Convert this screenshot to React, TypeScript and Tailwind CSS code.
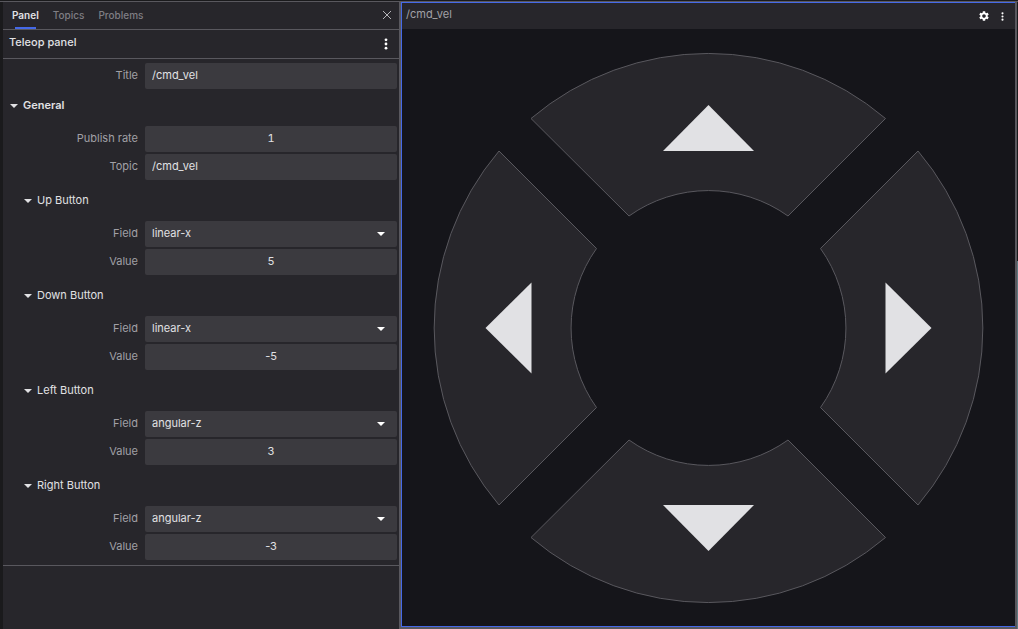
import { useId, useState } from "react";
import type { ReactNode } from "react";

const FIELDS = ["linear-x", "linear-y", "linear-z", "angular-x", "angular-y", "angular-z"];

function Caret() {
  return (
    <svg viewBox="0 0 8 4" className="h-1 w-2 shrink-0 fill-current" aria-hidden="true">
      <path d="M0 0h8L4 4z" />
    </svg>
  );
}

function Dots({ className }: { className: string }) {
  return (
    <svg viewBox="0 0 4 12" className={className} aria-hidden="true">
      <circle cx="2" cy="1.8" r="1.4" />
      <circle cx="2" cy="6" r="1.4" />
      <circle cx="2" cy="10.2" r="1.4" />
    </svg>
  );
}

function Gear() {
  return (
    <svg viewBox="2 2 20 20" className="h-2.5 w-2.5 fill-white" aria-hidden="true">
      <path
        fillRule="evenodd"
        d="M19.14 12.94c.04-.3.06-.61.06-.94 0-.32-.02-.64-.07-.94l2.03-1.58c.18-.14.23-.41.12-.61l-1.92-3.32c-.12-.22-.37-.29-.59-.22l-2.39.96c-.5-.38-1.03-.7-1.62-.94l-.36-2.54c-.04-.24-.24-.41-.48-.41h-3.84c-.24 0-.43.17-.47.41l-.36 2.54c-.59.24-1.13.57-1.62.94l-2.39-.96c-.22-.08-.47 0-.59.22L2.74 8.87c-.12.21-.08.47.12.61l2.03 1.58c-.05.3-.09.63-.09.94s.02.64.07.94l-2.03 1.58c-.18.14-.23.41-.12.61l1.92 3.32c.12.22.37.29.59.22l2.39-.96c.5.38 1.03.7 1.62.94l.36 2.54c.05.24.24.41.48.41h3.84c.24 0 .44-.17.47-.41l.36-2.54c.59-.24 1.13-.56 1.62-.94l2.39.96c.22.08.47 0 .59-.22l1.92-3.32c.12-.22.07-.47-.12-.61l-2.01-1.58zM12 15.6c-1.98 0-3.6-1.62-3.6-3.6s1.62-3.6 3.6-3.6 3.6 1.62 3.6 3.6-1.62 3.6-3.6 3.6z"
      />
    </svg>
  );
}

function Row({ label, id, children }: { label: string; id: string; children: ReactNode }) {
  return (
    <div className="grid h-[26px] grid-cols-[135px_1fr] items-center gap-[7px] pr-0.5">
      <label htmlFor={id} className="pb-0.5 text-right text-[#a1a0a6]">
        {label}
      </label>
      {children}
    </div>
  );
}

function TextField({ label, initial, centered }: { label: string; initial: string; centered?: boolean }) {
  const id = useId();
  const [value, setValue] = useState(initial);
  const signed = value.startsWith("-");
  return (
    <Row label={label} id={id}>
      <input
        id={id}
        value={value}
        onChange={(e) => setValue(e.target.value)}
        className={`h-full w-full min-w-0 rounded-xs bg-[#3b3a3f] px-[7px] pb-0.5 outline-none ${
          centered ? "text-center" : ""
        } ${centered && !signed ? "tabular-nums" : ""}`}
      />
    </Row>
  );
}

function SelectField({ label, initial }: { label: string; initial: string }) {
  const id = useId();
  const [value, setValue] = useState(initial);
  return (
    <Row label={label} id={id}>
      <div className="relative h-full">
        <select
          id={id}
          value={value}
          onChange={(e) => setValue(e.target.value)}
          className="h-full w-full appearance-none rounded-xs bg-[#3b3a3f] px-[7px] pb-0.5 outline-none"
        >
          {FIELDS.map((field) => (
            <option key={field}>{field}</option>
          ))}
        </select>
        <span className="pointer-events-none absolute inset-y-0 right-3 flex items-center text-white">
          <Caret />
        </span>
      </div>
    </Row>
  );
}

function ButtonSection({ name, field, value }: { name: string; field: string; value: string }) {
  const [open, setOpen] = useState(true);
  return (
    <section>
      <button
        type="button"
        aria-expanded={open}
        onClick={() => setOpen(!open)}
        className="flex h-[41px] w-full items-center gap-[5px] pl-[21px] text-left"
      >
        <Caret />
        {name}
      </button>
      {open && (
        <div className="flex flex-col gap-0.5">
          <SelectField label="Field" initial={field} />
          <TextField label="Value" initial={value} centered />
        </div>
      )}
    </section>
  );
}

function Sidebar() {
  const [open, setOpen] = useState(true);
  return (
    <aside className="w-[401px] shrink-0 border-r-2 border-l-[3px] border-r-[#59585e] border-l-[#1a1a1c] bg-[#27262b] text-xs text-[#e1e1e4]">
      <div className="flex h-7 items-center justify-between border-b border-[#59585e] pr-[7px] pl-[9px]">
        <div role="tablist" className="flex h-full gap-3.5 text-[10px] font-medium text-[#7f7e84]">
          <button
            type="button"
            role="tab"
            aria-selected="true"
            className="relative flex items-center font-semibold text-[#e1e1e4]"
          >
            Panel
            <span className="absolute inset-x-[3px] bottom-0 h-0.5 bg-[#4569e8]" />
          </button>
          <button type="button" role="tab" aria-selected="false">
            Topics
          </button>
          <button type="button" role="tab" aria-selected="false">
            Problems
          </button>
        </div>
        <button type="button" aria-label="Close sidebar" className="pb-0.5">
          <svg viewBox="0 0 10 10" className="h-2.5 w-2.5 stroke-[#b5b4b9]" aria-hidden="true">
            <path d="M1 1l8 8M9 1l-8 8" />
          </svg>
        </button>
      </div>
      <header className="flex h-[29px] items-center justify-between border-b border-[#59585e] pr-[11px] pl-1.5">
        <h1 className="pb-1 text-[11px] font-medium">Teleop panel</h1>
        <button type="button" aria-label="Panel menu">
          <Dots className="h-3 w-1 fill-white" />
        </button>
      </header>
      <div className="border-b border-[#59585e] pt-1 pb-[5px] text-[11px]">
        <TextField label="Title" initial="/cmd_vel" />
        <button
          type="button"
          aria-expanded={open}
          onClick={() => setOpen(!open)}
          className="flex h-[37px] w-full items-center gap-[5px] pb-1 pl-[7px] text-left font-semibold"
        >
          <Caret />
          General
        </button>
        {open && (
          <div>
            <div className="flex flex-col gap-0.5">
              <TextField label="Publish rate" initial="1" centered />
              <TextField label="Topic" initial="/cmd_vel" />
            </div>
            <ButtonSection name="Up Button" field="linear-x" value="5" />
            <ButtonSection name="Down Button" field="linear-x" value="-5" />
            <ButtonSection name="Left Button" field="angular-z" value="3" />
            <ButtonSection name="Right Button" field="angular-z" value="-3" />
          </div>
        )}
      </div>
    </aside>
  );
}

const DIRECTIONS = [
  {
    name: "Up",
    clip: "[clip-path:polygon(0_0,100%_0,50%_50%)]",
    segment: "M-177.5 -209.5A274 274 0 0 1 177 -209.5L79.5 -112A137 137 0 0 0 -79.5 -112Z",
    arrow: "M0 -223L45.5 -177H-45.5Z",
  },
  {
    name: "Down",
    clip: "[clip-path:polygon(0_100%,100%_100%,50%_50%)]",
    segment: "M-177.5 209.5A274 274 0 0 0 177 209.5L79.5 112A137 137 0 0 1 -79.5 112Z",
    arrow: "M0 223L45.5 177H-45.5Z",
  },
  {
    name: "Left",
    clip: "[clip-path:polygon(0_0,0_100%,50%_50%)]",
    segment: "M-209.5 -177A274 274 0 0 0 -209.5 177L-112 79.5A137 137 0 0 1 -112 -79.5Z",
    arrow: "M-223 0L-177 -45.5V45.5Z",
  },
  {
    name: "Right",
    clip: "[clip-path:polygon(100%_0,100%_100%,50%_50%)]",
    segment: "M209.5 -177A274 274 0 0 1 209.5 177L112 79.5A137 137 0 0 0 112 -79.5Z",
    arrow: "M223 0L177 -45.5V45.5Z",
  },
];

function TeleopPanel() {
  return (
    <main className="flex min-w-0 flex-1 flex-col border-y border-l border-[#4569e8] bg-[#15151a]">
      <header className="flex h-[26px] items-center justify-between bg-[#27262b] pr-[11px] pl-1 text-[11px] text-[#a1a0a6]">
        <h2 className="pb-1">/cmd_vel</h2>
        <div className="flex items-center gap-3">
          <button type="button" aria-label="Settings">
            <Gear />
          </button>
          <button type="button" aria-label="More">
            <Dots className="h-[9px] w-[3px] fill-white" />
          </button>
        </div>
      </header>
      <div className="grid min-h-0 flex-1 place-items-center">
        <div className="grid aspect-square h-full max-w-full">
          {DIRECTIONS.map((d) => (
            <button
              key={d.name}
              type="button"
              aria-label={d.name}
              className={`col-start-1 row-start-1 h-full w-full cursor-pointer ${d.clip}`}
            >
              <svg viewBox="-298.5 -299 597 597" className="h-full w-full" aria-hidden="true">
                <path d={d.segment} fill="#27262b" stroke="#59585e" />
                <path d={d.arrow} fill="#e1e1e4" />
              </svg>
            </button>
          ))}
        </div>
      </div>
    </main>
  );
}

export default function App() {
  return (
    <div className="flex h-screen flex-col bg-[#1a1a1c] font-['Inter',sans-serif]">
      <div className="h-0.5 border-b border-[#59585e]" />
      <div className="flex min-h-0 flex-1">
        <Sidebar />
        <div className="flex min-w-0 flex-1 border-r-2 border-b-2 border-[#59585e]">
          <TeleopPanel />
        </div>
        <div className="flex w-px flex-col">
          <div className="flex-[259]" />
          <div className="flex-[368] bg-[#5f7a82]" />
        </div>
      </div>
    </div>
  );
}
